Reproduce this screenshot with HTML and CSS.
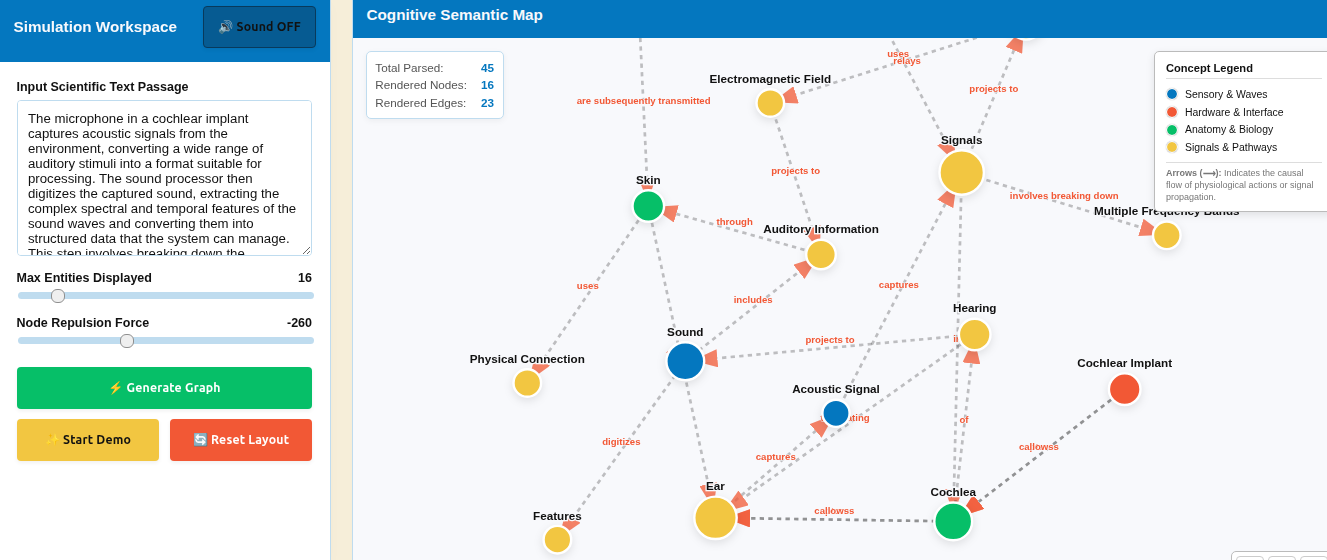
FILE: index.html
```html
<!DOCTYPE html>
<html lang="en">
  <head>
    <meta charset="utf-8">
    <title>Cognitive Semantic Map</title>
    <link rel="stylesheet" href="styles.css">
  </head>
  <body>
    <div class="layout">
      <!-- Left side: text input, sliders and buttons -->
      <aside class="workspace">
        <header class="workspace-header">
          <h2>Simulation Workspace</h2>
          <button class="btn btn-sound">🔊 Sound OFF</button>
        </header>
        <div class="workspace-body">
          <label class="field-label" for="passage">Input Scientific Text Passage</label>
          <textarea id="passage">The microphone in a cochlear implant captures acoustic signals from the environment, converting a wide range of auditory stimuli into a format suitable for processing. The sound processor then digitizes the captured sound, extracting the complex spectral and temporal features of the sound waves and converting them into structured data that the system can manage. This step involves breaking down the captured sound into multiple frequency bands.</textarea>
          <div class="slider-row">
            <div class="slider-label"><span>Max Entities Displayed</span><span>16</span></div>
            <input type="range" min="0" max="1000" value="117">
          </div>
          <div class="slider-row">
            <div class="slider-label"><span>Node Repulsion Force</span><span>-260</span></div>
            <input type="range" min="0" max="1000" value="360">
          </div>
          <div class="buttons">
            <button class="btn btn-generate">⚡ Generate Graph</button>
            <button class="btn btn-demo">✨ Start Demo</button>
            <button class="btn btn-reset">🔄 Reset Layout</button>
          </div>
        </div>
      </aside>

      <!-- Right side: the graph -->
      <main class="map">
        <header class="map-header"><h2>Cognitive Semantic Map</h2></header>
        <div class="canvas">
          <svg id="graph" width="974" height="522" viewBox="353 38 974 522">
            <defs>
              <marker id="arrow" viewBox="0 -9 25 18" refX="0" refY="0" markerWidth="25" markerHeight="18" markerUnits="userSpaceOnUse" orient="auto">
                <path d="M0,-9L25,0L0,9" class="arrow-head"/>
              </marker>
            </defs>
            <g id="edges"></g>
            <g id="edge-labels"></g>
            <g id="nodes"></g>
          </svg>

          <div class="stats">
            <div><span>Total Parsed:</span><b>45</b></div>
            <div><span>Rendered Nodes:</span><b>16</b></div>
            <div><span>Rendered Edges:</span><b>23</b></div>
          </div>

          <div class="legend">
            <h3>Concept Legend</h3>
            <ul>
              <li><i class="dot sensory"></i>Sensory &amp; Waves</li>
              <li><i class="dot hardware"></i>Hardware &amp; Interface</li>
              <li><i class="dot anatomy"></i>Anatomy &amp; Biology</li>
              <li><i class="dot signals"></i>Signals &amp; Pathways</li>
            </ul>
            <p><strong>Arrows (⟶):</strong> Indicates the causal flow of physiological actions or signal propagation.</p>
          </div>

          <div class="zoom-controls"><button></button><button></button><button></button></div>
        </div>
      </main>
    </div>
    <script src="graph.js"></script>
  </body>
</html>
```

FILE: styles.css
```css
* {
  box-sizing: border-box;
}
body {
  margin: 0;
  height: 560px;
  overflow: hidden;
  background-color: #f6eed9;
  color: #111;
  font-family: "Liberation Sans", Arial, sans-serif;
}
h2 {
  margin: 0;
  color: #f8f9fc;
  font-size: 15.27px;
  line-height: 18px;
}
.layout {
  display: grid;
  grid-template-columns: 331px 1fr;
  column-gap: 21px;
  height: 560px;
}

/* workspace */
.workspace {
  background: #fff;
  border-right: 1px solid #bfdcef;
  box-shadow: 0 4px 14px rgba(0, 0, 0, 0.02);
}
.workspace-header {
  display: flex;
  justify-content: space-between;
  align-items: flex-start;
  height: 62px;
  padding: 6px 14px 0 13.5px;
  background: #0477bf;
}
.workspace-header h2 {
  margin-top: 12px;
}
.workspace-body {
  padding: 17px 18px 0 17px;
}
.field-label {
  display: block;
  height: 21px;
  margin-left: -0.5px;
  font-size: 12.5px;
  font-weight: bold;
  line-height: 16px;
}
textarea {
  display: block;
  width: 295px;
  height: 156px;
  padding: 10px 14px 10px 10px;
  overflow: auto;
  border: 1px solid #bfdcef;
  border-radius: 4px;
  color: #111;
  font: 13.22px/15px "Liberation Sans", Arial, sans-serif;
  resize: vertical;
}
.slider-row {
  height: 45px;
  padding-top: 14px;
}
.slider-label {
  display: flex;
  justify-content: space-between;
  margin-left: -0.5px;
  font-size: 12.5px;
  font-weight: bold;
  line-height: 16px;
}
input[type="range"] {
  display: block;
  appearance: none;
  width: 296px;
  height: 7px;
  margin: 6px 0 0 1px;
  border-radius: 4px;
  background: #bfdcef;
}
input[type="range"]::-webkit-slider-thumb {
  appearance: none;
  width: 14px;
  height: 14px;
  border: 1px solid #8f8f8f;
  border-radius: 6px;
  background: #efefef;
}
.buttons {
  display: grid;
  grid-template-columns: 142px 142px;
  gap: 10px 11px;
  margin-top: 21px;
}
.btn {
  height: 42px;
  padding: 0 0 1px;
  border: none;
  border-radius: 4px;
  color: #fff;
  font: 600 12.3px Ubuntu, "Noto Sans", "Open Sans", sans-serif;
  letter-spacing: 0.2px;
  box-shadow: 0 2px 4px rgba(0, 0, 0, 0.06);
}
.btn-sound {
  width: 113px;
  border: 1px solid #083a5c;
  background: #065b92;
  color: #111;
}
.btn-generate {
  grid-column: 1 / 3;
  background: #06bf68;
}
.btn-demo {
  background: #f2c641;
  color: #111;
}
.btn-reset {
  background: #f25835;
}

/* map */
.map {
  overflow: hidden;
  border-left: 1px solid #bfdcef;
  background: #f8f9fc;
}
.map-header {
  height: 38px;
  padding: 6px 13.5px;
  background: #0477bf;
}
.canvas {
  position: relative;
  height: 522px;
}
#graph {
  display: block;
}
.edge {
  stroke: #111;
  stroke-width: 2.7;
  stroke-opacity: 0.34;
  stroke-dasharray: 4.3;
  opacity: 0.75;
}
.arrow-head {
  fill: #f25835;
}
.edge-label,
.node-label {
  font-weight: bold;
  text-anchor: middle;
  paint-order: stroke;
  stroke: #f8f9fc;
}
.edge-label {
  fill: #f25835;
  font-size: 9.6px;
  stroke-width: 1.2px;
}
.node-label {
  fill: #111;
  font-size: 11.7px;
  stroke-width: 2.6px;
}
.node {
  stroke: #fff;
  stroke-width: 2.4;
  filter: drop-shadow(0 3px 4px rgba(0, 0, 0, 0.1));
}
.sensory {
  fill: #0477bf;
  background: #0477bf;
}
.hardware {
  fill: #f25835;
  background: #f25835;
}
.anatomy {
  fill: #06bf68;
  background: #06bf68;
}
.signals {
  fill: #f2c641;
  background: #f2c641;
}

/* boxes over the canvas */
.stats {
  position: absolute;
  top: 13px;
  left: 13px;
  width: 138px;
  height: 68px;
  padding: 7px 9px 0 8.3px;
  border: 1px solid #bfdcef;
  border-radius: 5px;
  background: #fff;
  color: #555;
  font-size: 11.7px;
  line-height: 17.4px;
  box-shadow: 0 2px 6px rgba(0, 0, 0, 0.05);
}
.stats div {
  display: flex;
  justify-content: space-between;
}
.stats b {
  color: #0477bf;
}
.legend {
  position: absolute;
  top: 13px;
  left: 801px;
  width: 180px;
  height: 161px;
  padding: 8px 11px;
  border: 1px solid #bbb;
  border-radius: 5px;
  background: #fff;
  box-shadow: 0 3px 9px rgba(0, 0, 0, 0.1);
}
.legend h3 {
  margin: 0;
  padding-bottom: 2px;
  border-bottom: 1px solid #ddd;
  font-size: 11.1px;
  line-height: 16px;
}
.legend ul {
  margin: 6.5px 0 5.5px;
  padding: 0;
  list-style: none;
}
.legend li {
  display: flex;
  align-items: center;
  gap: 7px;
  height: 17.7px;
  font-size: 10.45px;
}
.dot {
  width: 12px;
  height: 12px;
  border: 1px solid #fff;
  border-radius: 50%;
  background-clip: padding-box;
  box-shadow: 0 0 1px rgba(0, 0, 0, 0.4);
}
.legend p {
  margin: 0;
  padding: 4px 6px 0 0;
  border-top: 1px solid #ddd;
  color: #777;
  font-size: 9px;
  line-height: 12px;
}
.zoom-controls {
  position: absolute;
  top: 513px;
  left: 878px;
  display: flex;
  gap: 4px;
  width: 110px;
  height: 38px;
  padding: 4px;
  border: 1px solid #bbb;
  border-radius: 5px;
  background: #fff;
}
.zoom-controls button {
  flex: none;
  width: 28px;
  height: 28px;
  padding: 0;
  border: 1px solid #ccc;
  border-radius: 4px;
  background: #fff;
}
```

FILE: graph.js
```js
const nodes = {
  tissue: { x: 639, y: 12, r: 15, group: 'anatomy', name: '' },
  nerve: { x: 852.5, y: -35, r: 15, group: 'anatomy', name: '' },
  brain: { x: 1026, y: 22, r: 17.5, group: 'signals', name: '' },
  skin: { x: 648.3, y: 206, r: 15.8, group: 'anatomy', name: 'Skin' },
  field: { x: 770.3, y: 103, r: 13.8, group: 'signals', name: 'Electromagnetic Field' },
  info: { x: 821, y: 254.5, r: 14.8, group: 'signals', name: 'Auditory Information' },
  signals: { x: 961.7, y: 172.5, r: 22.2, group: 'signals', name: 'Signals' },
  bands: { x: 1166.8, y: 235.3, r: 13.8, group: 'signals', name: 'Multiple Frequency Bands' },
  sound: { x: 685.3, y: 361.2, r: 18.9, group: 'sensory', name: 'Sound' },
  ear: { x: 715.5, y: 517.8, r: 21.2, group: 'signals', name: 'Ear' },
  cochlea: { x: 953.2, y: 521.4, r: 18.9, group: 'anatomy', name: 'Cochlea' },
  hearing: { x: 974.7, y: 334.5, r: 15.8, group: 'signals', name: 'Hearing' },
  implant: { x: 1124.7, y: 389.2, r: 15.8, group: 'hardware', name: 'Cochlear Implant' },
  acoustic: { x: 836, y: 413.3, r: 13.6, group: 'sensory', name: 'Acoustic Signal' },
  physical: { x: 527.3, y: 383, r: 13.8, group: 'signals', name: 'Physical Connection' },
  features: { x: 557.4, y: 539.7, r: 13.8, group: 'signals', name: 'Features' }
};

const edges = [
  ['tissue', 'skin', 'are subsequently transmitted'],
  ['skin', 'physical', 'uses'],
  ['info', 'skin', 'through'],
  ['field', 'info', 'projects to'],
  ['brain', 'field', 'uses'],
  ['nerve', 'signals', 'relays'],
  ['signals', 'brain', 'projects to'],
  ['signals', 'bands', 'involves breaking down'],
  ['skin', 'ear', 'travels'],
  ['sound', 'info', 'includes'],
  ['hearing', 'sound', 'projects to'],
  ['sound', 'features', 'digitizes'],
  ['acoustic', 'signals', 'captures'],
  ['ear', 'acoustic', 'captures'],
  ['hearing', 'ear', 'translating'],
  ['signals', 'cochlea', 'in'],
  ['cochlea', 'hearing', 'of'],
  ['cochlea', 'ear', 'captures'],
  ['cochlea', 'ear', 'allows'],
  ['implant', 'cochlea', 'captures'],
  ['implant', 'cochlea', 'allows']
];

function add(parent, tag, attrs, text) {
  const el = document.createElementNS('http://www.w3.org/2000/svg', tag);
  for (const key in attrs) el.setAttribute(key, attrs[key]);
  if (text) el.textContent = text;
  document.getElementById(parent).appendChild(el);
}

edges.forEach(([from, to, label]) => {
  const a = nodes[from];
  const b = nodes[to];
  const dist = Math.hypot(b.x - a.x, b.y - a.y);
  // stop short of the target so the arrow head fits
  const t = (dist - b.r - 13.3) / dist;
  add('edges', 'line', {
    class: 'edge',
    x1: a.x,
    y1: a.y,
    x2: a.x + (b.x - a.x) * t,
    y2: a.y + (b.y - a.y) * t,
    'marker-end': 'url(#arrow)'
  });
  add('edge-labels', 'text', { class: 'edge-label', x: (a.x + b.x) / 2, y: (a.y + b.y) / 2 - 5.2 }, label);
});

Object.values(nodes).forEach(n => {
  add('nodes', 'circle', { class: 'node ' + n.group, cx: n.x, cy: n.y, r: n.r });
});
Object.values(nodes).forEach(n => {
  if (n.name) add('nodes', 'text', { class: 'node-label', x: n.x, y: n.y - n.r - 6.4 }, n.name);
});
```
